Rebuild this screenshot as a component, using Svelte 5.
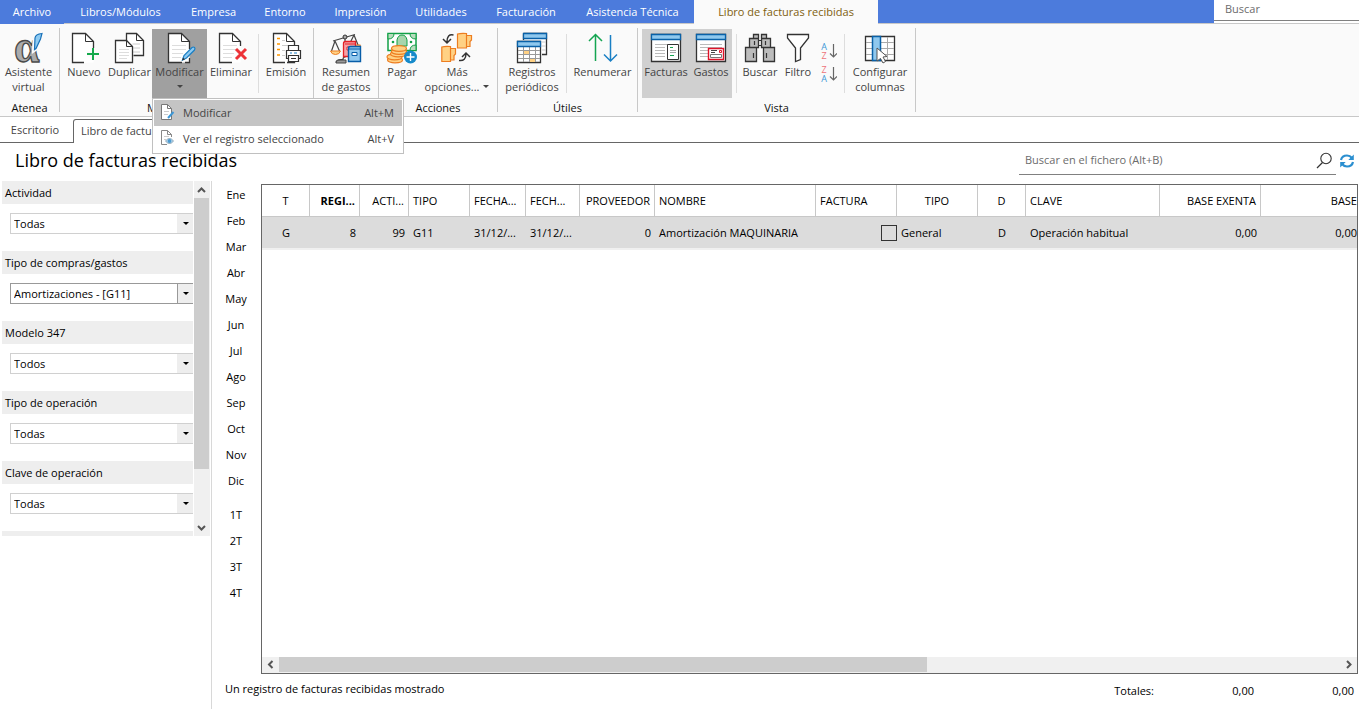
<script>
  const menus = [
    { label: 'Archivo', width: 64 },
    { label: 'Libros/Módulos', width: 113 },
    { label: 'Empresa', width: 73 },
    { label: 'Entorno', width: 70 },
    { label: 'Impresión', width: 81 },
    { label: 'Utilidades', width: 80 },
    { label: 'Facturación', width: 90 },
    { label: 'Asistencia Técnica', width: 123 }
  ];

  const page = (x = 4) =>
    `<path d="M${x + 0.5} 1.5H${x + 13.5}L${x + 21.5} 9.5V30.5H${x + 0.5}Z" fill="#fff"/>`;
  const fold = (x = 4) => `<path d="M${x + 13.5} 1.5V9.5H${x + 21.5}" fill="none" stroke="#333"/>`;
  const lines = (x = 4) =>
    `<path d="M${x + 4} 13.5H${x + 18}M${x + 4} 17.5H${x + 18}M${x + 4} 21.5H${x + 15}M${x + 4} 25.5H${x + 13}" stroke="#ddd"/>`;
  const outline = (tail) => `<path d="${tail}" fill="none" stroke="#333" stroke-width="1.3"/>`;
  const pen =
    '<path d="M18.5 28L20 23.5L28 15.5Q29.5 14.5 30.5 15.5Q31.5 16.5 30.5 18L22.5 26Z" fill="#8ec9f0" stroke="#1b7fc4" stroke-width="1.2"/><path d="M18 28.5L19 25.5L21 27.5Z" fill="#333"/>';

  const icons = {
    alpha:
      '<text x="1" y="30" font-family="Liberation Serif, serif" font-weight="700" font-size="46" fill="#ababab" stroke="#4a4a4a" stroke-width="1.3">α</text><path d="M20.5 19L21 6Q21.500 2 29 1.500L27.500 7L23.500 17Z" fill="#8ecbf2" stroke="#fafafa" stroke-width="3"/><path d="M21.5 17.500L22 6Q22.500 2 29 1.500L27.500 7L23 16.500Z" fill="#8ecbf2" stroke="#1971b8" stroke-width="1.2"/>',
    nuevo:
      page() + outline('M16 30.5H4.5V1.5H17.5L25.5 9.5V17') + fold() +
      '<path d="M25 16V28M19 22H31" stroke="#fafafa" stroke-width="5"/><path d="M25 16V28M19 22H31" stroke="#14a94b" stroke-width="2"/>',
    duplicar:
      '<path d="M12.5 9V1.5H22.5L29.5 8.5V23.5H19.5" fill="#fff" stroke="#333" stroke-width="1.3"/><path d="M18.5 12H26M19 16H26M19 20H26" fill="none" stroke="#ccc"/><path d="M22.5 1.5V8.5H29.5" fill="none" stroke="#333"/><path d="M1.5 8.5H12.5L18.5 14.5V30.5H1.5Z" fill="#fff" stroke="#333" stroke-width="1.3"/><path d="M12.5 8.5V14.5H18.5" fill="none" stroke="#333"/><path d="M5 17.5H15M5 20.5H15M5 23.5H15M5 26.5H13" stroke="#ddd"/>',
    modificar: page() + outline('M18 30.5H4.5V1.5H17.5L25.5 9.5V17M25.5 26V30.5H21') + fold() + lines() + pen,
    eliminar:
      page() + outline('M17 30.5H4.5V1.5H17.5L25.5 9.5V14') + fold() + lines() +
      '<path d="M21 17L31 27M31 17L21 27" stroke="#fafafa" stroke-width="5"/><path d="M21 17L31 27M31 17L21 27" stroke="#ed3237" stroke-width="3"/>',
    emision:
      page(3) + outline('M15 30.5H3.5V1.5H16.5L24.5 9.5V13M24.5 29V30.5H17') + fold(3) +
      '<path d="M7 6.5H10M7 12H10M7 17.5H10M7 23H10" stroke="#ff9800" stroke-width="1.3"/><path d="M12 8.5H15M12 13.5H20M12 18.5H15M12 23.5H15" stroke="#ccc"/><path d="M18.5 19V13.5H28.5V19M18.5 26.5H16.5V18.5H30.5V26.5H28.5M18.5 23.5H28.5V29.5H18.5Z" fill="#fff" stroke="#333" stroke-width="1.2"/><path d="M20 21H22M24 21H27" stroke="#1b7fc4"/><path d="M21 26.5H26" stroke="#333"/>',
    resumen:
      '<path d="M6 30.5Q6 27.5 11 27.5H13Q13 25 15 25V7M3 9L25 2.5M5 9L1.5 19M5 9L9.5 19M24 3L20 11M24 3L28 13" fill="none" stroke="#444" stroke-width="1.2"/><circle cx="15" cy="5" r="2" fill="#aaa" stroke="#333"/><path d="M6 31Q6 28 11 28H16V31Z" fill="#999" stroke="#444"/><path d="M.5 19H10.5Q9.5 22.5 5.5 22.5T.5 19Z" fill="#ffd184" stroke="#ed7d20"/><path d="M22 13H30.5Q30 15 26 16Z" fill="#ffd184" stroke="#ed7d20"/><path d="M13.5 11.5Q13.5 9.5 15.5 9.5H25.5V24.5H13.5Z" fill="#f6a1a5" stroke="#e32027" stroke-width="1.3"/><path d="M15 12H25M17 15H24V18H17Z" fill="#fff" stroke="#e32027"/><path d="M18.5 16Q18.5 14.5 20.5 14.5H30.5V29.5H18.5Z" fill="#91c8ee" stroke="#075da8" stroke-width="1.4"/><path d="M19 17H30M22 20.5H27V23.5H22Z" fill="#fff" stroke="#075da8"/>',
    pagar:
      '<path d="M2 1.5H30V18.5H2Z" fill="#fff" stroke="#12a047" stroke-width="1.5"/><path d="M2 1.5H8Q8 7 2 7ZM30 1.5H24Q24 7 30 7ZM30 18.5H24Q24 13 30 13Z" fill="#b7dcbd" stroke="#12a047"/><path d="M11 14V8Q12 3 16 3T21 8V14Z" fill="#a7d5ad" stroke="#12a047"/><circle cx="7" cy="10" r="1.3" fill="#12a047"/><circle cx="25" cy="10" r="1.3" fill="#12a047"/><g fill="#ffd184" stroke="#ed7d20" stroke-width="1.2"><ellipse cx="9" cy="28" rx="7.5" ry="2.8"/><ellipse cx="8.5" cy="25" rx="7.5" ry="2.8"/><ellipse cx="12" cy="22" rx="7.5" ry="2.8"/><ellipse cx="13" cy="19.5" rx="7.5" ry="2.8"/><ellipse cx="13" cy="16.5" rx="7.5" ry="2.8"/></g><circle cx="24.5" cy="25" r="6.5" fill="#168aca"/><path d="M24.5 21V29M20.5 25H28.5" stroke="#fff" stroke-width="1.4"/>',
    mas:
      '<g fill="#ffd184" stroke="#ed7d20" stroke-width="1.2"><path d="M25 3.5H30.500V8L29 9.5V14.5H25M16.5 2Q20 1 25.5 1.5V16H16.5Z"/><path d="M9 16.5H14.5V22L13 23.5V28H9M.8 15Q4 14 9.5 14.5V29.500H.8Z"/></g><path d="M12.5 3Q6 1.5 6 10M2 7L6 11L10 7" fill="none" stroke="#333" stroke-width="1.5"/><path d="M18 28.5Q25 29.5 25 21.500M21 25L25 21L29 25" fill="none" stroke="#333" stroke-width="1.5"/>',
    registros:
      '<path d="M7.5 1.5H30.5V22.5H26M7.5 1.5V8" fill="#fff" stroke="#333" stroke-width="1.3"/><path d="M7.5 1.5H30.5V6.5H7.5Z" fill="#8fc8ee" stroke="#0961a8" stroke-width="1.3"/><path d="M26 10H30M26 14H30M26 18H30" stroke="#ccc"/><path d="M1.5 9.5H24.5V30.5H1.5Z" fill="#fff" stroke="#333" stroke-width="1.3"/><path d="M7 19H13V22H7ZM13 27H19V30H13Z" fill="#ffd184"/><path d="M2 18.5H24M2 22.5H24M2 26.5H24M7.5 15V30M13.5 15V30M19.5 15V30" stroke="#999"/><path d="M1.5 9.5H24.5V14.5H1.5Z" fill="#8fc8ee" stroke="#0961a8" stroke-width="1.3"/>',
    renumerar:
      '<path d="M8.5 29V3M2 9L8.5 2.5L15 9" fill="none" stroke="#14a551" stroke-width="1.5"/><path d="M23.5 3V29M17 22.5L23.5 29L30 22.5" fill="none" stroke="#197fc4" stroke-width="1.5"/>',
    facturas:
      '<path d="M1.5 2.5H30.5V29.5H1.5Z" fill="#fff" stroke="#333" stroke-width="1.3"/><path d="M1.5 2.5H30.5V7.5H1.5Z" fill="#8fc8ee" stroke="#0961a8" stroke-width="1.3"/><path d="M5 12.5H27M5 15.5H15M5 18.5H15M5 21.5H15M5 24.5H15" stroke="#bbb" stroke-width="1.2"/><path d="M17.5 12.5H28.5V27.5H17.5Z" fill="#fff" stroke="#333"/><path d="M20 15.5H23M20 23.5H24" stroke="#14a551"/><path d="M20 18.5H26M20 20.5H26" stroke="#aaa"/>',
    gastos:
      '<path d="M1.5 2.5H30.5V29.5H1.5Z" fill="#fff" stroke="#333" stroke-width="1.3"/><path d="M1.5 2.5H30.5V7.5H1.5Z" fill="#8fc8ee" stroke="#0961a8" stroke-width="1.3"/><path d="M5 12.5H27M5 15.5H27M5 18.5H13M5 21.5H13M5 24.5H13" stroke="#bbb" stroke-width="1.2"/><path d="M13.5 16.5H28.5V27.5H13.5Z" fill="#fff" stroke="#df1328" stroke-width="1.4"/><path d="M16 18.5H22M16 20.5H20" stroke="#444"/><path d="M24.5 18.5H26.5V20.5H24.5Z" fill="#fff" stroke="#df1328"/><path d="M15.5 22.5H26.5V25.5H15.5Z" fill="#fff" stroke="#777"/>',
    buscar:
      '<path d="M9.5 2.5H14.5V6.5H9.5ZM17.5 2.5H22.5V6.5H17.5ZM5.5 6.5H14.5V15.5H5.5ZM17.5 6.5H26.5V15.5H17.5ZM1.5 15.5H12.5V29.5H1.5ZM19.5 15.5H30.5V29.5H19.5Z" fill="#bcbcbc" stroke="#333" stroke-width="1.3"/><path d="M14 8.5H18M14 13.5H18M10.5 9V13M21.5 9V13M9.5 21V26M22.5 21V26" stroke="#333" stroke-width="1.2"/>',
    filtro:
      '<path d="M5.5 2.5H26.5V6L18.5 16V27.5L13.5 29.5V16L5.5 6Z" fill="#fff" stroke="#333" stroke-width="1.3"/>',
    columnas:
      '<path d="M1.5 4.5H30.5V28.5H1.5Z" fill="#fff" stroke="#333" stroke-width="1.3"/><path d="M2 10.5H30M2 16.5H30M2 22.5H30M23.5 5V28" stroke="#aaa"/><path d="M8.5 4.5H16.5V28.5H8.5Z" fill="#8fc8ee" stroke="#0961a8" stroke-width="1.5"/><path d="M13 16L23 24.5L19 25L21.5 29.5L19 31L16.5 26.5L13 29Z" fill="#fff" stroke="#555"/>'
  };

  const groups = [
    { name: 'Atenea', width: 60, pad: 0, items: [{ icon: 'alpha', text: ['Asistente', 'virtual'], width: 57 }] },
    {
      name: 'Mantenimiento', width: 254, pad: 1,
      items: [
        { icon: 'nuevo', text: ['Nuevo'], width: 46 },
        { icon: 'duplicar', text: ['Duplicar'], width: 45 },
        { icon: 'modificar', text: ['Modificar'], width: 55, menu: true },
        { icon: 'eliminar', text: ['Eliminar'], width: 48 },
        { rule: true, width: 7 },
        { icon: 'emision', text: ['Emisión'], width: 48 }
      ]
    },
    { name: '', width: 65, pad: 4, items: [{ icon: 'resumen', text: ['Resumen', 'de gastos'], width: 56 }] },
    {
      name: 'Acciones', width: 119, pad: 1,
      items: [
        { icon: 'pagar', text: ['Pagar'], width: 44 },
        { icon: 'mas', text: ['Más', 'opciones...'], width: 66, more: true }
      ]
    },
    {
      name: 'Útiles', width: 140, pad: 3,
      items: [
        { icon: 'registros', text: ['Registros', 'periódicos'], width: 62 },
        { rule: true, width: 7 },
        { icon: 'renumerar', text: ['Renumerar'], width: 65 }
      ]
    },
    {
      name: 'Vista', width: 278, pad: 4,
      items: [
        { icon: 'facturas', text: ['Facturas'], width: 48, on: true },
        { icon: 'gastos', text: ['Gastos'], width: 42, on: true },
        { rule: true, width: 9 },
        { icon: 'buscar', text: ['Buscar'], width: 38 },
        { icon: 'filtro', text: ['Filtro'], width: 38 },
        { sort: true, width: 24 },
        { rule: true, width: 7 },
        { icon: 'columnas', text: ['Configurar', 'columnas'], width: 64 }
      ]
    }
  ];

  const filters = [
    { label: 'Actividad', value: 'Todas' },
    { label: 'Tipo de compras/gastos', value: 'Amortizaciones - [G11]', active: true },
    { label: 'Modelo 347', value: 'Todos' },
    { label: 'Tipo de operación', value: 'Todas' },
    { label: 'Clave de operación', value: 'Todas' }
  ];

  const months = ['Ene', 'Feb', 'Mar', 'Abr', 'May', 'Jun', 'Jul', 'Ago', 'Sep', 'Oct', 'Nov', 'Dic'];
  const quarters = ['1T', '2T', '3T', '4T'];

  const columns = [
    { head: 'T', cell: 'G', width: 48, align: 'center' },
    { head: 'REGI...', cell: '8', width: 50, align: 'right', bold: true },
    { head: 'ACTI...', cell: '99', width: 49, align: 'right' },
    { head: 'TIPO', cell: 'G11', width: 61, align: 'left' },
    { head: 'FECHA...', cell: '31/12/...', width: 56, align: 'left' },
    { head: 'FECH...', cell: '31/12/...', width: 54, align: 'left' },
    { head: 'PROVEEDOR', cell: '0', width: 75, align: 'right' },
    { head: 'NOMBRE', cell: 'Amortización MAQUINARIA', width: 161, align: 'left' },
    { head: 'FACTURA', check: true, width: 81, align: 'left' },
    { head: 'TIPO', cell: 'General', width: 81, align: 'center', cellAlign: 'left' },
    { head: 'D', cell: 'D', width: 48, align: 'center' },
    { head: 'CLAVE', cell: 'Operación habitual', width: 134, align: 'left' },
    { head: 'BASE EXENTA', cell: '0,00', width: 101, align: 'right' },
    { head: 'BASE', cell: '0,00', align: 'right' }
  ];
</script>

<div class="app">
  <header>
    <nav>
      {#each menus as m}
        <button style="width: {m.width}px">{m.label}</button>
      {/each}
      <button class="current">Libro de facturas recibidas</button>
    </nav>
    <div class="top-search"><input aria-label="Buscar" placeholder="Buscar" /></div>
  </header>

  <section class="ribbon">
    {#each groups as g}
      <div class="group" style="width: {g.width}px">
        <div class="tools" style="padding-left: {g.pad}px">
          {#each g.items as t}
            {#if t.rule}
              <span class="rule" style="width: {t.width}px"></span>
            {:else if t.sort}
              <div class="sorts" style="width: {t.width}px">
                {#each [['A', 'Z'], ['Z', 'A']] as pair}
                  <button aria-label="Ordenar {pair.join('-')}">
                    <span class="pair">
                      {#each pair as letter}<span class={letter}>{letter}</span>{/each}
                    </span>
                    <svg width="8" height="16" viewBox="0 0 8 16"><path d="M4.5 1V14M1 10.5L4.5 14L8 10.5" fill="none" stroke="#666" stroke-width="1.2" /></svg>
                  </button>
                {/each}
              </div>
            {:else}
              <div class="slot" style="width: {t.width}px">
                <button class="tool" class:on={t.on} class:open={t.menu}>
                  <svg width="32" height="32" viewBox="0 0 32 32">{@html icons[t.icon]}</svg>
                  {#each t.text as line, i}
                    <span>{line}{#if t.more && i === 1}<i class="caret inline"></i>{/if}</span>
                  {/each}
                  {#if t.menu}<span><i class="caret"></i></span>{/if}
                </button>
                {#if t.menu}
                  <div class="menu">
                    <button class="hot">
                      <svg width="16" height="18" viewBox="0 0 16 18"><path d="M1.5 1.5H7.5L11.5 5.5V16.5H1.5Z" fill="#fff" stroke="#777" /><path d="M7.5 1.5V5.5H11.5" fill="none" stroke="#777" /><path d="M4 8.5H9M4 11.5H8" stroke="#ccc" /><path d="M8 15L13.5 9" stroke="#3c97d6" stroke-width="2" /></svg>
                      <span>Modificar</span><kbd>Alt+M</kbd>
                    </button>
                    <button>
                      <svg width="16" height="18" viewBox="0 0 16 18"><path d="M7 15.5H1.5V1.5H7.5L11.5 5.5V8" fill="#fff" stroke="#888" /><path d="M7.5 1.5V5.5H11.5" fill="none" stroke="#888" /><path d="M4 7.5H9M4 10.5H6" stroke="#ccc" /><path d="M5.5 12Q9.500 7 13.5 12Q9.5 17 5.5 12Z" fill="#c3dff2" stroke="#8ba4b5" /><circle cx="9.5" cy="12" r="2" fill="#4d9bd0" /></svg>
                      <span>Ver el registro seleccionado</span><kbd>Alt+V</kbd>
                    </button>
                  </div>
                {/if}
              </div>
            {/if}
          {/each}
        </div>
        <div class="caption">{g.name}</div>
      </div>
    {/each}
  </section>

  <div class="tabs">
    <button>Escritorio</button>
    <button class="sel">Libro de facturas recibidas</button>
    <span class="fill"></span>
  </div>

  <div class="title">
    <h1>Libro de facturas recibidas</h1>
    <div class="find">
      <input aria-label="Buscar en el fichero" placeholder="Buscar en el fichero (Alt+B)" />
      <svg width="18" height="18" viewBox="0 0 18 18"><circle cx="11" cy="6.5" r="5.2" fill="none" stroke="#333" stroke-width="1.1" /><path d="M7.5 10.5L2 16" stroke="#333" stroke-width="1.2" /></svg>
    </div>
    <button class="refresh" aria-label="Actualizar">
      <svg width="16" height="16" viewBox="0 0 16 16"><path d="M2 7Q3 2.500 8 2.500Q11 2.500 13 5M14 9Q13 13.500 8 13.500Q5 13.500 3 11" fill="none" stroke="#2b8fd0" stroke-width="2.200" /><path d="M14.800 1.500V7H9.300ZM1.200 14.500V9H6.700Z" fill="#2b8fd0" /></svg>
    </button>
  </div>

  <main>
    <aside>
      <div class="panel">
        <div class="filters">
          {#each filters as f, i}
            <label for="filter-{i}">{f.label}</label>
            <div class="combo" class:active={f.active}>
              <select id="filter-{i}"><option>{f.value}</option></select>
              <span class="arrow"><i class="caret"></i></span>
            </div>
          {/each}
          <div class="next"></div>
        </div>
        <div class="vbar">
          <svg width="16" height="17" viewBox="0 0 16 17"><path d="M4 11L7.5 7.5L11 11" fill="none" stroke="#555" stroke-width="2" /></svg>
          <div class="thumb"></div>
          <svg width="16" height="17" viewBox="0 0 16 17"><path d="M4 7L7.5 10.5L11 7" fill="none" stroke="#555" stroke-width="2" /></svg>
        </div>
      </div>
    </aside>

    <div class="periods">
      {#each months as m}<button>{m}</button>{/each}
      <div class="gap"></div>
      {#each quarters as q}<button>{q}</button>{/each}
    </div>

    <div class="content">
      <div class="grid">
        <div class="clip">
          <table>
            <colgroup>
              {#each columns as c}<col style={c.width ? `width: ${c.width}px` : ''} />{/each}
            </colgroup>
            <thead>
              <tr>
                {#each columns as c}<th class={c.align} class:bold={c.bold}>{c.head}</th>{/each}
              </tr>
            </thead>
            <tbody>
              <tr>
                {#each columns as c}
                  <td class={c.cellAlign ?? c.align} class:box={c.check}>
                    {#if c.check}<input type="checkbox" aria-label="Factura" />{:else}{c.cell}{/if}
                  </td>
                {/each}
              </tr>
            </tbody>
          </table>
        </div>
        <div class="hbar">
          <svg width="17" height="16" viewBox="0 0 17 16"><path d="M10.5 4L7 7.5L10.5 11" fill="none" stroke="#555" stroke-width="2" /></svg>
          <div class="track"><div class="thumb"></div></div>
          <svg width="17" height="16" viewBox="0 0 17 16"><path d="M7 4L10.5 7.5L7 11" fill="none" stroke="#555" stroke-width="2" /></svg>
        </div>
      </div>
      <footer>
        <span class="status">Un registro de facturas recibidas mostrado</span>
        <span class="total">Totales:</span>
        <span class="total">0,00</span>
        <span class="total">0,00</span>
      </footer>
    </div>
  </main>
</div>

<style>
  :global(body) {
    background: #fff;
  }
  .app {
    display: flex;
    flex-direction: column;
    min-height: 100vh;
    overflow: hidden;
    font: 11px/15px 'Open Sans', 'Noto Sans', sans-serif;
    color: #000;
  }
  :where(.app) :where(button, input, select) {
    font: inherit;
    color: inherit;
    border: 0;
    padding: 0;
    margin: 0;
    background: none;
    border-radius: 0;
    box-sizing: border-box;
    white-space: nowrap;
    outline: 0;
  }
  svg {
    display: block;
    flex: none;
  }

  header {
    display: flex;
    justify-content: space-between;
    height: 24px;
    background: #4c7bdc;
    box-shadow: inset 0 -1px #c8c8c8;
  }
  nav {
    display: flex;
  }
  nav button {
    padding-bottom: 1px;
    color: #fff;
    border-bottom: 1px solid #c8c8c8;
  }
  nav button:first-child {
    border-color: #4c7bdc;
  }
  nav .current {
    width: 184px;
    background: #fafafa;
    color: #80600f;
    border-color: #fafafa;
  }
  .top-search {
    width: 145px;
    background: #fff;
    border-bottom: 1px solid #c8c8c8;
  }
  .top-search input {
    display: block;
    width: 100%;
    height: 21px;
    padding: 0 11px 3px;
    border-bottom: 1px solid #808080;
  }
  input::placeholder {
    color: #6c6c6c;
    opacity: 1;
  }

  .ribbon {
    display: flex;
    height: 92px;
    background: #fafafa;
    border-bottom: 1px solid #c8c8c8;
    color: #444;
  }
  .group {
    display: flex;
    flex-direction: column;
    flex: none;
    box-sizing: border-box;
    height: 84px;
    margin-top: 4px;
    border-right: 1px solid #c8c8c8;
  }
  .tools {
    display: flex;
    height: 69px;
    padding-top: 1px;
  }
  .slot {
    position: relative;
    flex: none;
  }
  .tool {
    display: flex;
    flex-direction: column;
    align-items: center;
    width: 100%;
    height: 69px;
    padding-top: 3px;
  }
  .tool svg {
    overflow: visible;
  }
  .tool span {
    display: flex;
    align-items: center;
    justify-content: center;
    height: 15px;
  }
  .on {
    background: #d0d0d0;
  }
  .open {
    background: #a0a0a0;
  }
  .caret {
    width: 0;
    border: 3px solid transparent;
    border-top-color: currentColor;
    border-bottom: 0;
  }
  .caret.inline {
    margin-left: 4px;
  }
  .rule {
    flex: none;
    height: 59px;
    margin-top: 5px;
    background: linear-gradient(#ddd, #ddd) center / 1px 100% no-repeat;
  }
  .caption {
    padding-top: 2px;
    text-align: center;
    color: #111;
  }
  .sorts {
    display: flex;
    flex: none;
    flex-direction: column;
    align-items: center;
    gap: 5px;
    padding-top: 13px;
  }
  .sorts button {
    display: flex;
    align-items: center;
    gap: 2px;
  }
  .pair {
    display: grid;
    font-size: 9px;
    line-height: 9px;
  }
  .A {
    color: #3c97d6;
  }
  .Z {
    color: #ee7379;
  }

  .menu {
    position: absolute;
    z-index: 2;
    top: 69px;
    left: 0;
    box-sizing: border-box;
    width: 252px;
    height: 56px;
    padding: 1px;
    border: 1px solid #c0c0c0;
    background: #fff;
  }
  .menu button {
    display: flex;
    align-items: center;
    width: 100%;
    height: 26px;
    padding: 0 8px 2px 6px;
    color: #444;
  }
  .hot {
    background: #c4c4c4;
  }
  .menu span {
    margin-left: 7px;
  }
  kbd {
    margin-left: auto;
    font: inherit;
  }

  .tabs {
    display: flex;
    align-items: flex-end;
    height: 26px;
    color: #444;
  }
  .tabs button {
    width: 73px;
    height: 24px;
    padding: 0 3px 2px 0;
    border-bottom: 1px solid #666;
  }
  .tabs .sel {
    width: 160px;
    padding: 0 7px 2px;
    border: 1px solid #666;
    border-bottom: 0;
    border-radius: 3px 3px 0 0;
    text-align: left;
  }
  .fill {
    flex: 1;
    border-bottom: 1px solid #666;
  }

  .title {
    display: flex;
    align-items: center;
    height: 38px;
    padding: 0 4px 0 15px;
  }
  h1 {
    flex: 1;
    margin: 0;
    font-size: 18px;
    font-weight: 400;
    line-height: 34px;
    padding-bottom: 4px;
  }
  .find {
    display: flex;
    align-items: center;
    box-sizing: border-box;
    width: 317px;
    height: 28px;
    margin-bottom: 2px;
    padding: 0 3px 0 6px;
    border-bottom: 1px solid #808080;
  }
  .find input {
    flex: 1;
    padding-bottom: 2px;
  }
  .refresh {
    margin-left: 3px;
    padding-bottom: 2px;
  }

  main {
    display: flex;
    flex: 1;
  }
  aside {
    box-sizing: border-box;
    width: 212px;
    padding-left: 2px;
    border-right: 1px solid #d8d8d8;
  }
  .panel {
    display: flex;
    gap: 1px;
  }
  .filters {
    flex: 1;
  }
  label {
    display: block;
    padding: 0 3px;
    background: #eee;
    line-height: 23px;
  }
  .combo {
    display: flex;
    height: 19px;
    margin: 9px 0 17px 8px;
    border: 1px solid #d0d0d0;
    border-right: 0;
  }
  .combo select {
    flex: 1;
    min-width: 0;
    appearance: none;
    padding-left: 3px;
  }
  .arrow {
    display: grid;
    place-items: center;
    width: 15px;
    background: #eee;
    pointer-events: none;
    border-left: 1px solid #eee;
  }
  .active,
  .active .arrow {
    border-color: #999;
  }
  .next {
    height: 5px;
    background: #eee;
  }
  .vbar {
    display: flex;
    flex-direction: column;
    width: 16px;
    margin-right: 1px;
    background: #f0f0f0;
  }
  .vbar .thumb {
    width: 15px;
    height: 271px;
    margin-bottom: auto;
    background: #cdcdcd;
  }

  .periods {
    display: flex;
    flex-direction: column;
    box-sizing: border-box;
    width: 49px;
    padding-right: 1px;
  }
  .periods button {
    height: 26px;
  }
  .gap {
    height: 8px;
  }

  .content {
    display: flex;
    flex: 1;
    flex-direction: column;
    min-width: 0;
    padding-top: 3px;
  }
  .grid {
    display: flex;
    flex: 1;
    flex-direction: column;
    margin-right: 1px;
    border: 1px solid #666;
  }
  .clip {
    flex: 1;
    overflow: hidden;
  }
  table {
    width: 100%;
    table-layout: fixed;
    border-collapse: separate;
    border-spacing: 0;
  }
  th,
  td {
    box-sizing: border-box;
    height: 32px;
    padding: 0 4px;
    font-weight: 400;
    white-space: nowrap;
    overflow: hidden;
  }
  th {
    border-right: 1px solid #c8c8c8;
    border-bottom: 1px solid #c8c8c8;
  }
  td {
    height: 33px;
    background: #dcdcdc;
    border-bottom: 2px solid #f0f0f0;
  }
  th:last-child {
    border-right: 0;
    padding-right: 0;
  }
  td:last-child {
    padding-right: 0;
  }
  .left {
    text-align: left;
  }
  .right {
    text-align: right;
  }
  .center {
    text-align: center;
  }
  .bold {
    font-weight: 700;
  }
  .box {
    padding: 0;
  }
  td input {
    appearance: none;
    display: block;
    width: 16px;
    height: 16px;
    margin-left: auto;
    border: 1px solid #333;
  }
  .hbar {
    display: flex;
    height: 16px;
    background: #f0f0f0;
  }
  .track {
    flex: 1;
  }
  .track .thumb {
    width: 61.1%;
    height: 15px;
    background: #cdcdcd;
  }
  footer {
    display: flex;
    align-items: center;
    box-sizing: border-box;
    height: 35px;
    padding: 0 5px 3px 0;
  }
  .status {
    flex: 1;
    margin-left: -36px;
    padding-bottom: 4px;
  }
  .total {
    width: 100px;
    text-align: right;
  }
</style>
